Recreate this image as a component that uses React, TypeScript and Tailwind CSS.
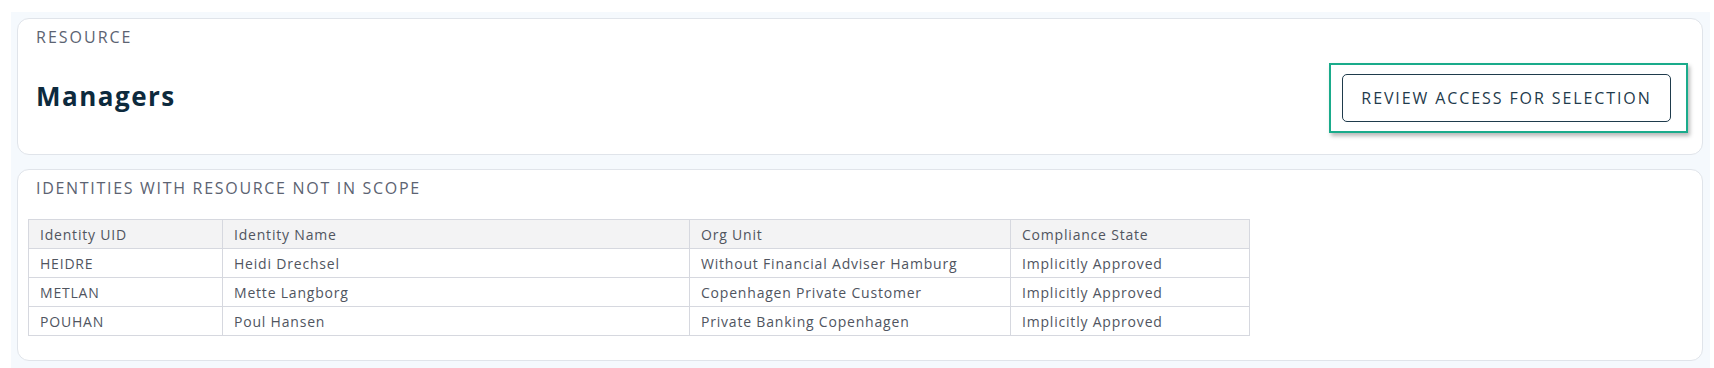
import React from "react";

const rows = [
  ["HEIDRE", "Heidi Drechsel", "Without Financial Adviser Hamburg", "Implicitly Approved"],
  ["METLAN", "Mette Langborg", "Copenhagen Private Customer", "Implicitly Approved"],
  ["POUHAN", "Poul Hansen", "Private Banking Copenhagen", "Implicitly Approved"],
];

export default function App() {
  return (
    <div
      className="bg-white pl-[11px] pt-[12px] pr-[4px] h-[368px] overflow-hidden"
      style={{ fontFamily: '"Open Sans", "Noto Sans", sans-serif' }}
    >
      <div className="bg-[#f5f9fd] h-[400px] pl-[6px] pr-[7px] pt-[6px] flex flex-col gap-[14px]">
        {/* Card 1 */}
        <div className="bg-white border border-[#e0e4ea] rounded-[12px] pl-[18px] pr-[14px] pt-[6px] pb-[21px]">
          <div className="text-[16px] leading-[24px] tracking-[2px] text-[#5c6372]">RESOURCE</div>
          <div className="mt-[14px] flex items-center justify-between">
            <div className="pb-[4px] text-[26px] leading-[32px] font-bold tracking-[1.5px] text-[#0d2a3d]">
              Managers
            </div>
            <div className="border-2 border-[#1aab8b] bg-white pl-[11px] pr-[15px] py-[9px] shadow-[2px_3px_4px_rgba(0,0,0,0.28)]">
              <button className="w-[329px] h-[48px] border border-[#1f3b4c] rounded-[5px] text-[16px] tracking-[1.9px] text-[#1f3b4c] flex items-center justify-center bg-white">
                REVIEW ACCESS FOR SELECTION
              </button>
            </div>
          </div>
        </div>

        {/* Card 2 */}
        <div className="bg-white border border-[#e0e4ea] rounded-[12px] pl-[10px] pr-[14px] pt-[6px] pb-[24px]">
          <div className="pl-[8px] text-[16px] leading-[24px] tracking-[1.7px] text-[#5c6372]">
            IDENTITIES WITH RESOURCE NOT IN SCOPE
          </div>
          <table className="mt-[19px] w-[1221px] table-fixed border-collapse text-[14px] tracking-[0.8px] text-[#50555f]">
            <colgroup>
              <col className="w-[194px]" />
              <col className="w-[467px]" />
              <col className="w-[321px]" />
              <col className="w-[239px]" />
            </colgroup>
            <thead>
              <tr className="h-[29px] bg-[#f3f3f4]">
                {["Identity UID", "Identity Name", "Org Unit", "Compliance State"].map((h) => (
                  <th
                    key={h}
                    className="border border-[#d6d8df] px-[11px] py-0 text-left font-normal"
                  >
                    {h}
                  </th>
                ))}
              </tr>
            </thead>
            <tbody>
              {rows.map((r) => (
                <tr key={r[0]} className="h-[29px]">
                  {r.map((c, i) => (
                    <td key={i} className="border border-[#d6d8df] px-[11px] py-0">
                      {c}
                    </td>
                  ))}
                </tr>
              ))}
            </tbody>
          </table>
        </div>
      </div>
    </div>
  );
}
